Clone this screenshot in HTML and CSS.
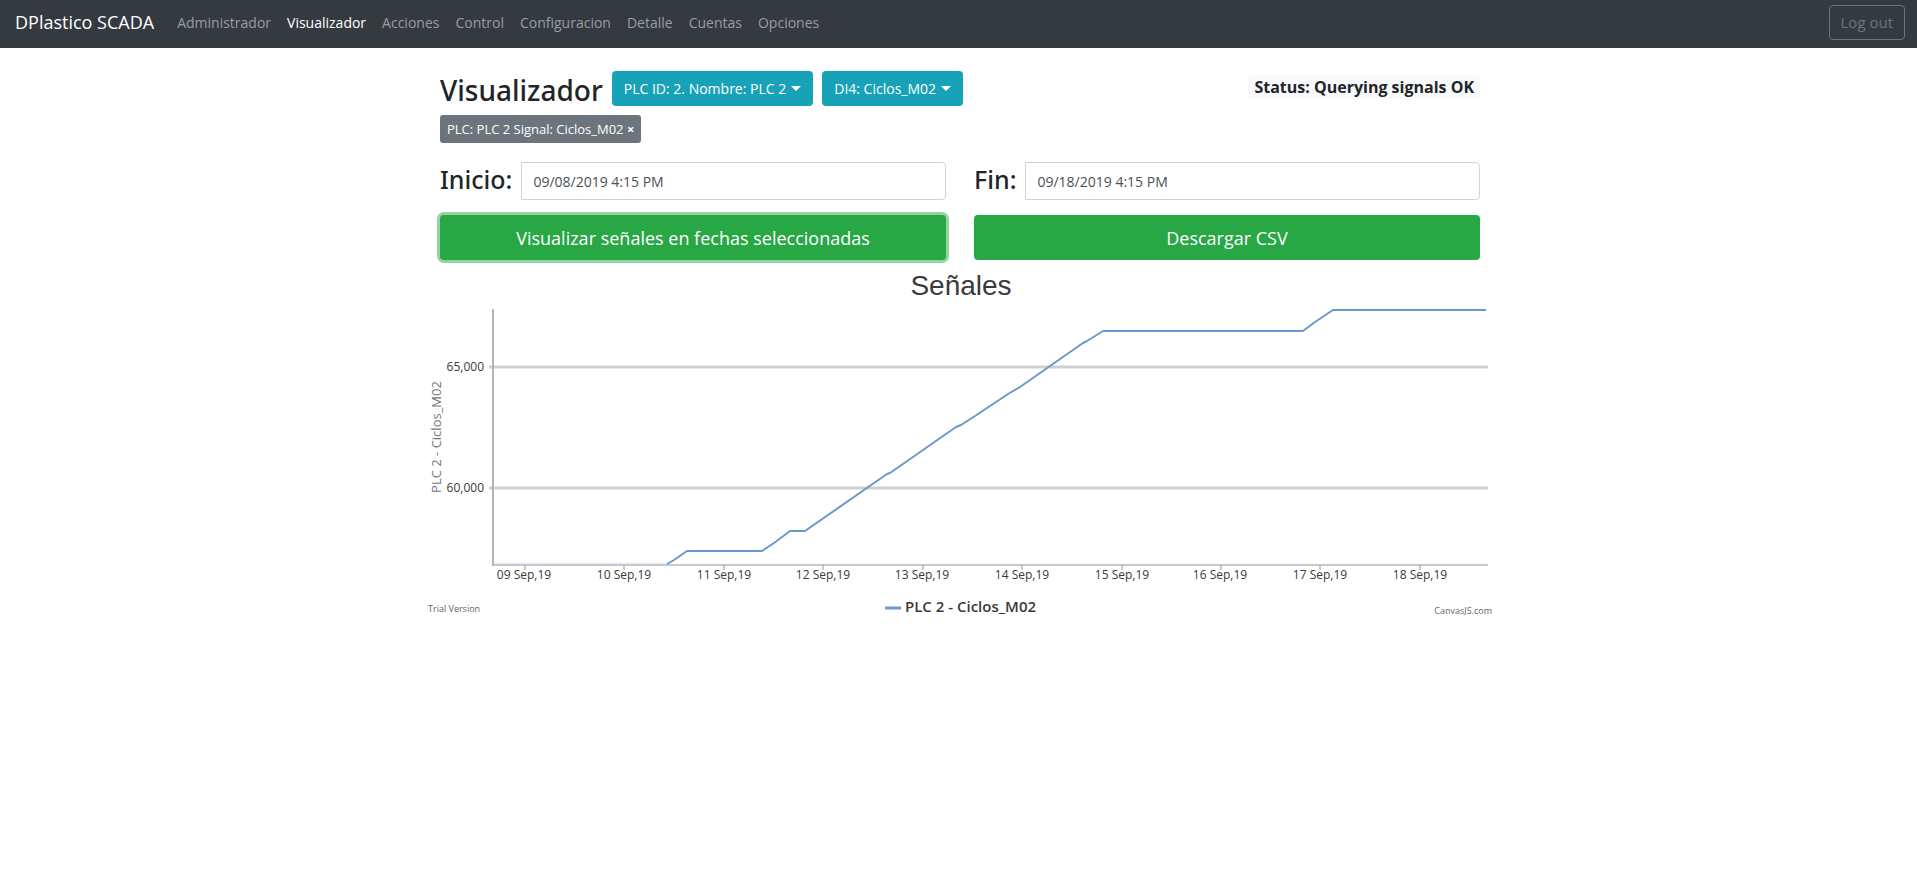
FILE: index.html
```html
<!DOCTYPE html>
<html lang="es">
<head>
<meta charset="utf-8">
<title>DPlastico SCADA</title>
<link rel="stylesheet" href="styles.css">
</head>
<body>
<nav class="navbar">
  <a class="brand" href="#">DPlastico SCADA</a>
  <ul class="nav-list">
    <li><a class="nav-link" href="#">Administrador</a></li>
    <li><a class="nav-link active" href="#">Visualizador</a></li>
    <li><a class="nav-link" href="#">Acciones</a></li>
    <li><a class="nav-link" href="#">Control</a></li>
    <li><a class="nav-link" href="#">Configuracion</a></li>
    <li><a class="nav-link" href="#">Detalle</a></li>
    <li><a class="nav-link" href="#">Cuentas</a></li>
    <li><a class="nav-link" href="#">Opciones</a></li>
  </ul>
  <button class="btn btn-outline" type="button">Log out</button>
</nav>
<main class="container">
  <header class="heading">
    <h1 class="title">Visualizador</h1>
    <button class="btn btn-info" type="button">PLC ID: 2. Nombre: PLC 2<span class="caret"></span></button>
    <button class="btn btn-info" type="button">DI4: Ciclos_M02<span class="caret"></span></button>
    <span class="status">Status: Querying signals OK</span>
  </header>
  <div class="signals">
    <button class="btn btn-signal" type="button">PLC: PLC 2 Signal: Ciclos_M02 <b>×</b></button>
  </div>
  <form class="range">
    <div class="field">
      <label class="label" for="inicio">Inicio:</label>
      <input class="input" id="inicio" type="text" value="09/08/2019 4:15 PM">
    </div>
    <div class="field">
      <label class="label" for="fin">Fin:</label>
      <input class="input" id="fin" type="text" value="09/18/2019 4:15 PM">
    </div>
    <button class="btn btn-success focused" type="button">Visualizar señales en fechas seleccionadas</button>
    <button class="btn btn-success" type="button">Descargar CSV</button>
  </form>
  <svg class="chart" viewBox="425 264 1070 360" role="img" aria-label="Señales">
    <text class="chart-title" x="961" y="295">Señales</text>
    <path class="grid" d="M489 367H1488M489 488H1488"/>
    <path class="axis" d="M493 309V566"/>
    <path class="baseline" d="M493 565H1488"/>
    <path class="ticks" d="M525 565v5M624 565v5M724 565v5M823 565v5M923 565v5M1022 565v5M1122 565v5M1221 565v5M1320 565v5M1420 565v5"/>
    <path class="flat" d="M494 564H668"/>
    <path class="series" d="M667 564L674 560L687 551H762L774 543L790 531H805L887 474L890 473L956 427L961 425L975 416L1008 394L1020 387L1083 343L1087 341L1103 331H1303L1315 322L1333 310H1486"/>
    <g class="y-labels"><text x="484" y="371">65,000</text><text x="484" y="492">60,000</text></g>
    <g class="x-labels">
      <text x="524" y="579">09 Sep,19</text><text x="624" y="579">10 Sep,19</text><text x="724" y="579">11 Sep,19</text><text x="823" y="579">12 Sep,19</text><text x="922" y="579">13 Sep,19</text>
      <text x="1022" y="579">14 Sep,19</text><text x="1122" y="579">15 Sep,19</text><text x="1220" y="579">16 Sep,19</text><text x="1320" y="579">17 Sep,19</text><text x="1420" y="579">18 Sep,19</text>
    </g>
    <text class="y-title" transform="translate(441 437) rotate(-90)">PLC 2 - Ciclos_M02</text>
    <path class="key" d="M885 608H901"/>
    <text class="legend" x="905" y="612">PLC 2 - Ciclos_M02</text>
    <text class="credit" x="428" y="612">Trial Version</text>
    <text class="credit end" x="1492" y="614">CanvasJS.com</text>
  </svg>
</main>
</body>
</html>
```
FILE: styles.css
```css
* { box-sizing: border-box; }
body {
  margin: 0;
  background: #fff;
  color: #212529;
  font: 15px/22px "Open Sans", "Noto Sans", sans-serif;
}
a { text-decoration: none; }
.navbar {
  display: flex;
  align-items: center;
  min-height: 48px;
  padding: 5px 12px 8px 15px;
  background: #343a40;
}
.brand { margin-right: 23px; padding-bottom: 2px; color: #fff; font-size: 18px; }
.nav-list { display: flex; gap: 16px; margin: 0; padding: 0; list-style: none; }
.nav-link { color: #9a9da0; font-size: 14px; }
.nav-link.active { color: #fff; }
.btn {
  border: 1px solid transparent;
  border-radius: 4px;
  color: #fff;
  font: inherit;
  white-space: nowrap;
}
.btn-outline {
  margin-left: auto;
  height: 35px;
  padding: 0 11px 2px;
  border-color: #6c757d;
  background: transparent;
  color: #6c757d;
}
.container { max-width: 1073px; margin: 0 auto; padding: 23px 15px 0 18px; }
.heading { display: flex; gap: 9px; align-items: flex-start; }
.title { margin: 0; font: 500 28px/38px "Noto Sans", "Open Sans", sans-serif; }
.btn-info { height: 35px; padding: 0 11px; background: #17a2b8; font-size: 14px; }
.caret {
  display: inline-block;
  margin-left: 5px;
  vertical-align: 3px;
  border: 5px solid transparent;
  border-top-color: #fff;
  border-bottom: 0;
}
.status {
  margin: 4px 0 0 auto;
  padding: 0 6px;
  border-radius: 4px;
  background: #f8f9fa;
  font-size: 16px;
  line-height: 24px;
  font-weight: 700;
}
.signals { display: flex; padding: 6px 0 19px; }
.btn-signal { height: 28px; padding: 0 6px; border-radius: 3px; background: #6c757d; font-size: 13px; }
.range { display: grid; grid-template-columns: 1fr 1fr; gap: 15px 28px; }
.field { display: flex; gap: 9px; }
.label { font: 500 25px/34px "Noto Sans", "Open Sans", sans-serif; }
.input {
  flex: 1;
  min-width: 0;
  height: 38px;
  padding: 0 11px;
  border: 1px solid #ced4da;
  border-radius: 0 4px 4px 0;
  color: #495057;
  font: 14px "Open Sans", "Noto Sans", sans-serif;
}
.btn-success { height: 45px; background: #28a745; font-size: 18px; }
.focused { box-shadow: 0 0 0 3px #94d3a2; }
.chart {
  display: block;
  width: calc(100% + 30px);
  margin: 4px -15px 0;
  font-family: "Open Sans", "Noto Sans", sans-serif;
  fill: #3a3a3a;
}
.chart-title { font-family: "Liberation Sans", Arial, sans-serif; font-size: 28px; text-anchor: middle; }
.chart path { fill: none; }
.grid { stroke: #d0d0d0; stroke-width: 3; }
.axis { stroke: #b4b4b4; stroke-width: 2; }
.baseline { stroke: #c8c8c8; stroke-width: 2; }
.ticks { stroke: #999; stroke-width: 1; }
.flat { stroke: #bed0e6; stroke-width: 1; }
.series { stroke: #6a97cf; stroke-width: 2; stroke-linejoin: round; }
.y-labels { font-size: 12px; text-anchor: end; }
.x-labels { font-size: 12px; text-anchor: middle; }
.y-title { font-size: 13px; text-anchor: middle; fill: #777; }
.key { stroke: #6a97cf; stroke-width: 3; }
.legend { font-size: 15px; font-weight: 600; }
.credit { font-size: 9px; fill: #666; }
.end { text-anchor: end; }
```
